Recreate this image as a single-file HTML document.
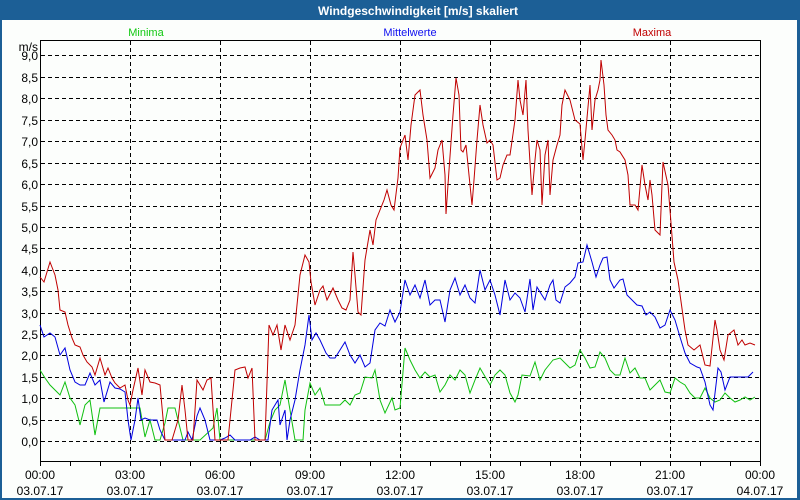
<!DOCTYPE html>
<html><head><meta charset="utf-8"><style>
html,body{margin:0;padding:0;background:#fff;}
svg{display:block;}
text{font-family:"Liberation Sans","DejaVu Sans",sans-serif;}
</style></head><body>
<svg width="800" height="500" viewBox="0 0 800 500" xmlns="http://www.w3.org/2000/svg">
<rect x="0" y="0" width="800" height="500" fill="#1c5f96"/>
<rect x="2" y="20" width="795" height="478" fill="#fcfefc"/>
<text x="418" y="15" fill="#fff" font-size="12" font-weight="bold" text-anchor="middle">Windgeschwindigkeit [m/s] skaliert</text>
<text x="146" y="36" fill="#10c810" font-size="11" text-anchor="middle">Minima</text>
<text x="410" y="36" fill="#1010f0" font-size="11" text-anchor="middle">Mittelwerte</text>
<text x="652" y="36" fill="#c00000" font-size="11" text-anchor="middle">Maxima</text>
<g stroke="#000" stroke-width="1" stroke-dasharray="4,3" fill="none">
<path d="M41 55.5H760M41 77.5H760M41 98.5H760M41 120.5H760M41 141.5H760M41 163.5H760M41 184.5H760M41 206.5H760M41 227.5H760M41 248.5H760M41 270.5H760M41 291.5H760M41 313.5H760M41 334.5H760M41 355.5H760M41 377.5H760M41 398.5H760M41 420.5H760M41 441.5H760"/>
<path d="M130.5 41V462M220.5 41V462M310.5 41V462M400.5 41V462M490.5 41V462M580.5 41V462M670.5 41V462"/>
</g>
<path d="M40.5 40.5H760.5V461.5H40.5Z" fill="none" stroke="#000"/>
<g stroke="#000"><path d="M40.5 462v4M70.5 462v4M100.5 462v4M130.5 462v4M160.5 462v4M190.5 462v4M220.5 462v4M250.5 462v4M280.5 462v4M310.5 462v4M340.5 462v4M370.5 462v4M400.5 462v4M430.5 462v4M460.5 462v4M490.5 462v4M520.5 462v4M550.5 462v4M580.5 462v4M610.5 462v4M640.5 462v4M670.5 462v4M700.5 462v4M730.5 462v4M760.5 462v4"/></g>
<g font-size="12" fill="#000" text-anchor="end">
<text x="38" y="51">m/s</text>
<text x="38" y="60">9,0</text><text x="38" y="82">8,5</text><text x="38" y="103">8,0</text><text x="38" y="125">7,5</text><text x="38" y="146">7,0</text><text x="38" y="168">6,5</text><text x="38" y="189">6,0</text><text x="38" y="211">5,5</text><text x="38" y="232">5,0</text><text x="38" y="253">4,5</text><text x="38" y="275">4,0</text><text x="38" y="296">3,5</text><text x="38" y="318">3,0</text><text x="38" y="339">2,5</text><text x="38" y="360">2,0</text><text x="38" y="382">1,5</text><text x="38" y="403">1,0</text><text x="38" y="425">0,5</text><text x="38" y="446">0,0</text>
</g>
<g font-size="12" fill="#000" text-anchor="middle">
<text x="40" y="479">00:00</text><text x="40" y="495">03.07.17</text>
<text x="130" y="479">03:00</text><text x="130" y="495">03.07.17</text>
<text x="220" y="479">06:00</text><text x="220" y="495">03.07.17</text>
<text x="310" y="479">09:00</text><text x="310" y="495">03.07.17</text>
<text x="400" y="479">12:00</text><text x="400" y="495">03.07.17</text>
<text x="490" y="479">15:00</text><text x="490" y="495">03.07.17</text>
<text x="580" y="479">18:00</text><text x="580" y="495">03.07.17</text>
<text x="670" y="479">21:00</text><text x="670" y="495">03.07.17</text>
<text x="760" y="479">00:00</text><text x="760" y="495">04.07.17</text>
</g>
<g fill="none" stroke-width="1">
<polyline stroke="#10c010" points="40,370 45,378 50,385 55,390 60,395 65,382 70,398 75,405 80,425 85,405 90,400 95,435 100,408 140,408 145,437 150,420 155,440 160,440 165,423 168,408 175,408 178,420 183,440 200,440 213,428 217,408 220,440 265,440 270,422 275,410 280,405 285,380 290,410 295,440 303,440 305,410 310,383 315,395 320,388 325,405 340,405 345,400 350,405 355,395 360,393 365,377 372,378 375,370 380,400 385,413 392,398 395,410 400,408 405,348 410,360 415,370 420,378 425,372 430,377 435,375 440,392 445,385 450,375 455,380 460,370 465,375 470,393 475,380 480,368 490,385 495,375 500,370 505,375 510,393 515,402 518,395 522,375 530,376 535,362 540,380 545,370 553,360 560,358 565,363 570,368 575,365 580,350 585,358 590,368 595,367 600,352 605,358 610,370 615,375 620,375 625,358 630,373 635,368 640,378 645,378 650,390 655,385 660,380 665,392 670,393 675,378 680,382 685,385 690,393 695,398 700,398 705,388 710,398 715,402 720,400 725,393 730,398 735,402 740,400 745,397 750,400 755,397"/>
<polyline stroke="#0000e0" points="40,325 44,337 50,333 55,337 60,355 65,348 70,370 75,382 80,385 85,385 90,373 95,385 100,380 104,402 110,382 115,388 120,389 125,392 128,420 131,440 135,420 138,398 141,420 145,418 150,420 157,420 160,430 165,440 185,440 188,432 192,440 197,416 200,408 205,420 210,440 220,440 225,438 230,435 235,440 250,440 255,437 260,440 268,440 272,410 278,400 280,425 285,410 287,440 290,420 295,400 300,370 305,345 309,315 312,340 316,333 320,340 326,353 330,358 335,358 340,350 345,342 350,355 355,363 360,355 365,367 370,363 375,330 380,323 385,326 390,310 395,322 400,312 405,280 410,295 415,285 420,298 425,280 430,305 435,300 440,300 445,322 450,290 455,278 460,295 465,285 470,298 475,303 480,270 485,290 490,280 495,295 500,315 505,280 510,300 515,293 520,298 525,312 530,279 533,310 537,287 540,292 545,300 550,285 553,280 556,300 560,303 565,287 570,283 575,277 578,263 583,262 587,245 592,262 596,277 600,265 603,258 607,257 610,280 614,288 620,280 623,279 627,295 632,300 637,305 642,306 646,315 650,312 655,317 660,328 665,325 670,310 675,320 680,337 685,353 690,363 697,367 700,368 705,382 710,405 713,410 718,368 721,372 725,390 730,377 748,377 753,372"/>
<polyline stroke="#c00000" points="40,277 44,282 50,262 55,275 58,290 60,310 65,312 68,325 72,338 75,345 80,347 83,355 87,362 92,367 95,375 100,358 105,375 108,368 112,378 115,383 120,388 125,385 128,400 130,405 133,390 138,368 142,395 145,370 150,382 155,383 160,385 165,440 172,440 178,420 182,385 185,410 188,440 193,440 197,380 203,390 207,380 211,378 215,440 228,440 235,370 240,368 245,367 248,378 252,368 255,440 265,440 269,325 273,335 277,325 281,350 285,325 290,340 295,325 300,275 305,255 309,262 311,282 315,305 320,290 323,286 327,300 333,288 338,300 342,308 346,310 350,300 353,252 355,275 358,312 361,315 365,260 370,230 373,245 376,220 380,210 384,200 387,190 391,205 394,210 398,178 400,148 405,135 408,160 411,125 415,95 420,90 423,115 427,140 430,178 435,168 438,150 442,140 445,175 446,214 449,170 453,115 456,78 459,95 461,150 463,152 466,145 470,185 472,205 474,180 477,140 480,105 483,125 487,143 490,140 493,145 497,180 500,178 503,165 507,155 510,155 515,120 518,80 520,100 523,115 526,80 528,130 532,195 535,160 537,140 540,150 542,205 545,155 548,140 550,195 553,160 557,145 560,135 562,105 565,90 570,100 575,120 580,124 583,160 585,140 590,85 592,130 595,100 598,90 600,80 601,60 604,85 606,115 608,130 612,135 615,140 617,150 620,152 625,160 628,175 630,205 635,205 638,210 642,165 645,185 648,200 650,180 652,195 655,230 660,235 662,185 663,162 668,185 670,210 674,262 678,280 685,330 688,345 694,350 700,345 705,365 710,366 715,320 717,330 720,350 724,360 728,335 734,330 738,345 742,340 745,345 750,343 755,345"/>
</g>
</svg>
</body></html>
